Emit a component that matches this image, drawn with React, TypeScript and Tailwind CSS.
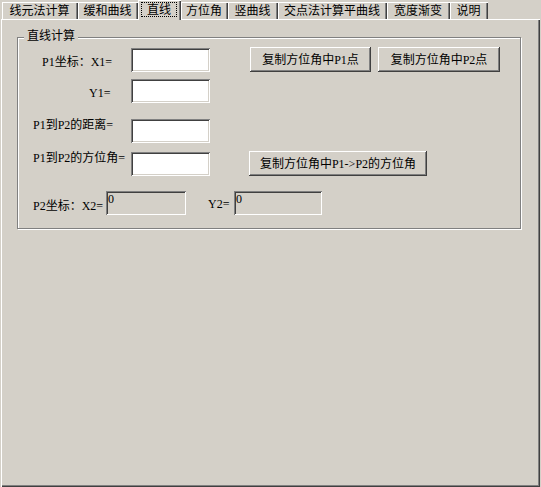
const FONT = "font-['Liberation_Serif','Noto_Sans_CJK_SC',serif]";
const SUNKEN =
  'shadow-[inset_1px_1px_0_#808080,inset_-1px_-1px_0_#ffffff,inset_2px_2px_0_#404040,inset_-2px_-2px_0_#d4d0c8]';
const RAISED =
  'shadow-[inset_-1px_-1px_0_#404040,inset_1px_1px_0_#ffffff,inset_-2px_-2px_0_#808080]';

const tabs = [
  { label: '线元法计算', w: 'w-[76px]' },
  { label: '缓和曲线', w: 'w-[60px]' },
  { label: '直线', w: 'w-[43px]', active: true },
  { label: '方位角', w: 'w-[47px]' },
  { label: '竖曲线', w: 'w-[50px]' },
  { label: '交点法计算平曲线', w: 'w-[109px]' },
  { label: '宽度渐变', w: 'w-[63px]' },
  { label: '说明', w: 'w-[38px]' },
];

function Input({ w = 'w-[79px]', value, readOnly }: { w?: string; value?: string; readOnly?: boolean }) {
  return (
    <div
      className={`${w} h-[24px] ${SUNKEN} ${readOnly ? 'bg-[#d4d0c8]' : 'bg-white'} pl-[2px] pt-[2px] text-[12px] leading-[12px] text-black`}
    >
      {value}
    </div>
  );
}

function Button({ w, children }: { w: string; children: React.ReactNode }) {
  return (
    <div
      className={`${w} h-[25px] ${RAISED} flex items-center justify-center text-[12px] leading-[12px] text-black`}
    >
      {children}
    </div>
  );
}

export default function App() {
  return (
    <div className={`w-[541px] h-[487px] bg-[#d4d0c8] text-black ${FONT} text-[12px] overflow-hidden`}>
      {/* Tabs */}
      <div className="h-[19px] flex items-end pl-[2px]">
        {tabs.map((t) =>
          t.active ? (
            <div
              key={t.label}
              className={`${t.w} h-[20px] -mb-[1px] relative z-10 bg-[#d4d0c8] shadow-[inset_1px_1px_0_#ffffff,inset_-1px_0_0_#404040,inset_-2px_0_0_#808080] flex items-start pl-[3px]`}
            >
              <div className="mt-[2px] w-[36px] h-[15px] border border-dotted border-black flex items-center justify-center leading-[12px]">
                {t.label}
              </div>
            </div>
          ) : (
            <div
              key={t.label}
              className={`${t.w} h-[17px] shadow-[inset_1px_1px_0_#ffffff,inset_-1px_0_0_#404040,inset_-2px_0_0_#808080] flex items-center justify-center leading-[12px] pr-[1px]`}
            >
              {t.label}
            </div>
          )
        )}
      </div>

      {/* Panel */}
      <div className="ml-[1px] w-[539px] h-[468px] shadow-[inset_1px_1px_0_#ffffff,inset_-1px_-1px_0_#404040,inset_-2px_-2px_0_#808080] pt-[18px] pl-[16px]">
        <div className="relative w-[504px] h-[192px] border border-[#808080] shadow-[inset_1px_1px_0_#ffffff,1px_1px_0_#ffffff]">
          <div className="absolute left-[6px] -top-[8px] h-[12px] px-[3px] bg-[#d4d0c8] leading-[12px]">直线计算</div>

          {/* Row 1 */}
          <div className="mt-[9px] h-[25px] flex items-start">
            <div className="w-[113px] pl-[24px] mt-[9px] leading-[12px]">P1坐标：X1=</div>
            <div className="mt-[1px]">
              <Input />
            </div>
            <div className="ml-[40px]">
              <Button w="w-[121px]">复制方位角中P1点</Button>
            </div>
            <div className="ml-[7px]">
              <Button w="w-[122px]">复制方位角中P2点</Button>
            </div>
          </div>

          {/* Row 2 */}
          <div className="mt-[7px] h-[24px] flex items-start">
            <div className="w-[113px] pl-[71px] mt-[8px] leading-[12px]">Y1=</div>
            <Input />
          </div>

          {/* Row 3 */}
          <div className="mt-[16px] h-[24px] flex items-start">
            <div className="w-[113px] pl-[15px] leading-[12px]">P1到P2的距离=</div>
            <Input />
          </div>

          {/* Row 4 */}
          <div className="mt-[8px] h-[25px] flex items-start">
            <div className="w-[113px] pl-[15px] mt-[1px] leading-[12px] whitespace-nowrap">P1到P2的方位角=</div>
            <div className="mt-[1px]">
              <Input />
            </div>
            <div className="ml-[39px]">
              <Button w="w-[178px]">复制方位角中P1-&gt;P2的方位角</Button>
            </div>
          </div>

          {/* Row 5 */}
          <div className="mt-[15px] h-[24px] flex items-start">
            <div className="w-[88px] pl-[15px] mt-[9px] leading-[12px] whitespace-nowrap">P2坐标：X2=</div>
            <Input w="w-[80px]" value="0" readOnly />
            <div className="ml-[22px] w-[26px] mt-[7px] leading-[12px]">Y2=</div>
            <Input w="w-[88px]" value="0" readOnly />
          </div>
        </div>
      </div>
    </div>
  );
}
